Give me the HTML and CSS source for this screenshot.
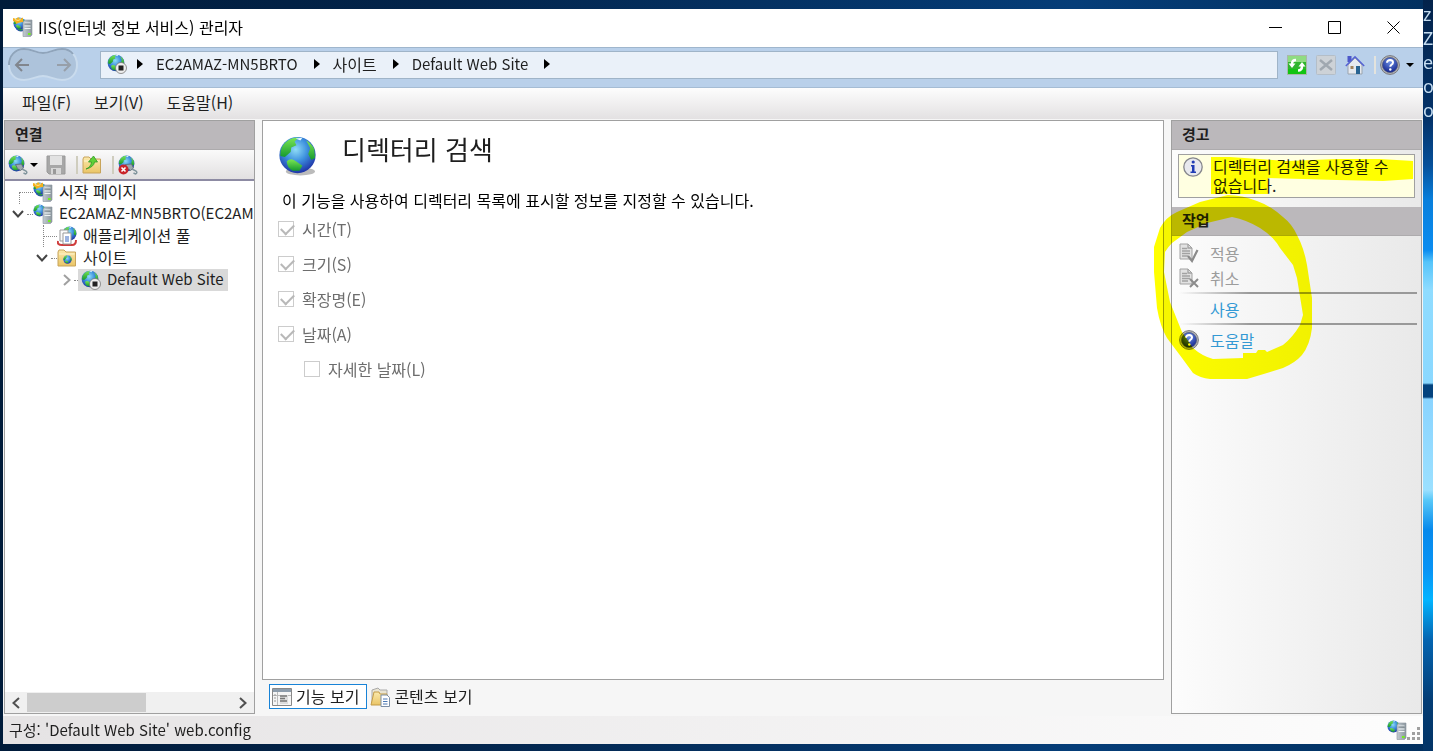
FILE: index.html
```
<!DOCTYPE html>
<html lang="ko">

<head>
  <meta charset="UTF-8">
  <meta name="viewport" content="width=device-width, initial-scale=1.0">
  <title>IIS(인터넷 정보 서비스) 관리자</title>
  <link rel="stylesheet" href="styles.css">
</head>

<body>
  <!-- shared icons -->
  <svg class="sprite" aria-hidden="true">
    <defs>
      <radialGradient id="sea" cx=".45" cy=".35" r=".65">
        <stop offset="0" stop-color="#8fdcf6" />
        <stop offset=".5" stop-color="#3d90de" />
        <stop offset="1" stop-color="#1f35a8" />
      </radialGradient>
      <linearGradient id="land" x2="0" y2="1">
        <stop offset="0" stop-color="#7be653" />
        <stop offset="1" stop-color="#169a30" />
      </linearGradient>
      <linearGradient id="metal" x2="1">
        <stop offset="0" stop-color="#c3ccd2" />
        <stop offset="1" stop-color="#8b969d" />
      </linearGradient>
      <linearGradient id="paper" x2="0" y2="1">
        <stop offset="0" stop-color="#fbe9ac" />
        <stop offset="1" stop-color="#eac566" />
      </linearGradient>
      <radialGradient id="blue" cx=".5" cy=".3" r=".7">
        <stop offset="0" stop-color="#6b8fe6" />
        <stop offset="1" stop-color="#14248c" />
      </radialGradient>
    </defs>
    <symbol id="globe" viewBox="0 0 20 20">
      <circle cx="10" cy="10" r="9.3" fill="url(#sea)" />
      <path d="M2 6C4 2.500 7 1 10.500 1L8.500 3.200 9.500 5 6.800 6.200 6.500 8.500 3.500 11 1.200 10.500Q1 8 2 6Z" fill="url(#land)" />
      <path d="M4.500 13.200Q6.500 11.300 9 13L12.500 15.500 11 18 7.500 18Q4.500 16.500 4.500 13.200Z" fill="url(#land)" />
      <path d="M14.500 2.500Q17.500 4.200 18.600 7L19 11.500 17 12.500 15.500 9.500 16.500 6.500Z" fill="url(#land)" />
      <path d="M9 1.500L12.500 1.200 11.500 2.500Z" fill="#e8faff" />
    </symbol>
    <symbol id="server" viewBox="0 0 20 20">
      <svg x="0" y="0" width="13" height="13"><use href="#globe" /></svg>
      <path d="M10 5L12 3H19V18L17.500 19.500H10Z" fill="url(#metal)" stroke="#8b969d" stroke-width=".6" />
      <path d="M11.500 6H17.500M11.500 9H17.500M11.500 11.500H17.500" stroke="#eef3f5" stroke-width="1.200" />
      <path d="M11.500 7H17.500" stroke="#5d686e" stroke-width=".7" />
      <rect x="15" y="16" width="2.600" height="2" fill="#72f11c" />
    </symbol>
    <symbol id="start" viewBox="0 0 20 20">
      <svg x="1" y="1" width="14" height="14"><use href="#globe" /></svg>
      <use href="#server" />
      <path d="M0 1L3.500 2 5 0 7 2 10 .5 10 5 6.500 5.500 3 7 2.500 5 0 4Z" fill="#f5b01f" />
      <path d="M2 2.500L5 3.500 7.500 2.500" stroke="#fde48b" fill="none" />
    </symbol>
    <symbol id="site" viewBox="0 0 20 20">
      <svg x="0" y="0" width="18" height="18"><use href="#globe" /></svg>
      <circle cx="14" cy="14" r="5.500" fill="#eee" stroke="#777" stroke-width=".8" />
      <rect x="11.500" y="11.500" width="5" height="5" fill="#222" />
    </symbol>
    <symbol id="connect" viewBox="0 0 20 20">
      <svg x="0" y="0" width="17" height="17"><use href="#globe" /></svg>
      <path d="M7.500 9.500L13.500 9 15.500 13 12.500 15.500 9.500 13.500Z" fill="#9ba8ae" stroke="#59666c" stroke-width=".8" />
      <path d="M14 14L18 16Q20 18 17.500 19L15.500 18" fill="none" stroke="#81959d" stroke-width="1.500" />
    </symbol>
    <symbol id="folder" viewBox="0 0 20 20">
      <path d="M1 4L2 2H7L9 4H18.500V18H1Z" fill="url(#paper)" stroke="#c8a45a" />
      <path d="M2 6H17.500" stroke="#fff4cc" />
    </symbol>
    <symbol id="help" viewBox="0 0 20 20">
      <circle cx="10" cy="10" r="9.400" fill="#b8b8ba" stroke="#77787c" />
      <circle cx="10" cy="10" r="7.600" fill="url(#blue)" stroke="#4e5878" stroke-width=".7" />
      <path d="M7 7.800Q7.200 5 10.200 5Q13 5.100 13 7.500Q13 9 11.300 9.900Q10.300 10.500 10.300 11.800" fill="none" stroke="#fff" stroke-width="2" />
      <circle cx="10.300" cy="14.500" r="1.200" fill="#fff" />
    </symbol>
    <symbol id="doc" viewBox="0 0 20 20">
      <path d="M1 1H9L13 5V16H1Z" fill="#e2e2e2" stroke="#a2a2a2" />
      <path d="M9 1V5H13M3 5.500H8M3 8H11M3 10.500H11M3 13H9" fill="none" stroke="#a2a2a2" stroke-width="1.300" />
    </symbol>
  </svg>

  <div class="desktop-text" aria-hidden="true">
    <span>z</span>
    <span>Z</span>
    <span>e</span>
    <span>o</span>
    <span>o</span>
  </div>

  <div class="window">
    <header class="title-bar">
      <svg class="icon"><use href="#start" /></svg>
      <h1>IIS(인터넷 정보 서비스) 관리자</h1>
      <div class="window-buttons">
        <button type="button" aria-label="최소화"><svg viewBox="0 0 13 13"><path d="M0 6.500H13" /></svg></button>
        <button type="button" aria-label="최대화"><svg viewBox="0 0 13 13"><path d="M.5 .5H12.500V12.500H.5Z" /></svg></button>
        <button type="button" aria-label="닫기"><svg viewBox="0 0 13 13"><path d="M.5 .5L12.500 12.500M12.500 .5L.5 12.500" /></svg></button>
      </div>
    </header>

    <div class="nav-bar">
      <div class="history">
        <svg class="history-shape" viewBox="0 0 70 34">
          <path d="M16 1C24 1 28 5 35 5S46 1 54 1C63 1 69 8 69 17S63 32 54 32C46 32 42 28 35 28S24 32 16 32C7 32 1 26 1 17S7 1 16 1Z" fill="#adc3db" stroke="#c9dbed" stroke-width="2" />
          <path d="M1 17C1 8 7 1 16 1C24 1 28 5 35 5S46 1 54 1Q61 1 65 6" fill="none" stroke="#8fa4bb" stroke-width="2" />
        </svg>
        <button type="button" aria-label="뒤로"><svg viewBox="0 0 16 16"><path d="M15 8H2M8 2L2 8L8 14" /></svg></button>
        <button type="button" aria-label="앞으로" class="forward"><svg viewBox="0 0 16 16"><path d="M1 8H14M8 2L14 8L8 14" /></svg></button>
      </div>
      <nav class="address">
        <svg class="icon"><use href="#site" /></svg>
        <i class="arrow"></i>
        <a href="#" class="latin">EC2AMAZ-MN5BRTO</a>
        <i class="arrow"></i>
        <a href="#">사이트</a>
        <i class="arrow"></i>
        <a href="#" class="latin">Default Web Site</a>
        <i class="arrow"></i>
      </nav>
      <div class="nav-tools">
        <button type="button" aria-label="새로 고침">
          <svg class="icon" viewBox="0 0 20 20">
            <rect x=".5" y=".5" width="19" height="19" fill="#2fb52d" stroke="#a9b8a9" />
            <path d="M1 1H19V7H1Z" fill="#8fdc82" />
            <path d="M1 14H19V19H1Z" fill="#12c412" />
            <path d="M9 5Q5 5 5 9" fill="none" stroke="#fff" stroke-width="2.500" />
            <path d="M1.500 8.500H8.500L5 13Z" fill="#fff" />
            <path d="M11 15.500Q15 15.500 15 11" fill="none" stroke="#fff" stroke-width="2.500" />
            <path d="M11.500 11.500H18.500L15 7Z" fill="#fff" />
          </svg>
        </button>
        <button type="button" aria-label="중지" disabled>
          <svg class="icon" viewBox="0 0 20 20">
            <rect x=".5" y=".5" width="19" height="19" rx="1" fill="#cdd2d7" stroke="#b4bec8" />
            <path d="M4 5L16 15M16 5L4 15" stroke="#a0a8b0" stroke-width="2.500" />
          </svg>
        </button>
        <button type="button" aria-label="홈">
          <svg class="icon" viewBox="0 0 20 20">
            <path d="M2.500 1H6.500V7H2.500Z" fill="#4b57c9" />
            <path d="M3 10L10 3 17 10V19H3Z" fill="#e6e9ee" stroke="#9ba4ae" />
            <path d="M.8 11L10 1.800 19.200 11" fill="none" stroke="#5562d4" stroke-width="1.500" />
            <path d="M11 11H15V19H11Z" fill="#286391" />
            <path d="M5.500 11H8.500V14H5.500Z" fill="#a1835d" />
          </svg>
        </button>
        <span class="divider"></span>
        <button type="button" class="help-menu" aria-label="도움말">
          <svg class="icon"><use href="#help" /></svg>
          <i class="caret"></i>
        </button>
      </div>
    </div>

    <nav class="menu-bar">
      <button type="button">파일(F)</button>
      <button type="button">보기(V)</button>
      <button type="button">도움말(H)</button>
    </nav>

    <main class="panes">
      <section class="pane connections">
        <h2>연결</h2>
        <div class="toolbar">
          <button type="button" aria-label="연결 만들기"><svg class="icon"><use href="#connect" /></svg><i class="caret"></i></button>
          <button type="button" aria-label="저장" disabled>
            <svg class="icon" viewBox="0 0 20 20">
              <path d="M1 1H19V19H3L1 17Z" fill="#a7a7a7" stroke="#999" />
              <path d="M4 1H16V10H4Z" fill="#e2e2e2" />
              <path d="M5 13H15V19H5Z" fill="#d7d7d7" />
              <path d="M7 14H10V19H7Z" fill="#999" />
            </svg>
          </button>
          <span class="divider"></span>
          <button type="button" aria-label="위로">
            <svg class="icon" viewBox="0 0 20 20">
              <use href="#folder" />
              <path d="M4 14Q9 12 9.500 7L6.500 7 11.500 1 15.500 7 12.500 7Q12 12 4 14Z" fill="#5fd038" stroke="#2e9a24" stroke-width=".8" />
            </svg>
          </button>
          <span class="divider"></span>
          <button type="button" aria-label="연결 제거">
            <svg class="icon" viewBox="0 0 20 20">
              <use href="#connect" />
              <circle cx="5.500" cy="14.500" r="5" fill="#c9252b" />
              <path d="M3.500 12.500L7.500 16.500M7.500 12.500L3.500 16.500" stroke="#fff" stroke-width="1.600" />
            </svg>
          </button>
        </div>

        <ul class="tree">
          <li class="node level-1">
            <span class="toggle dots corner"></span>
            <svg class="icon"><use href="#start" /></svg>
            <span class="node-name">시작 페이지</span>
          </li>
          <li class="node level-1">
            <span class="toggle"><svg viewBox="0 0 12 8"><path d="M1 1L6 6.500 11 1" /></svg></span>
            <svg class="icon"><use href="#server" /></svg>
            <span class="node-name latin">EC2AMAZ-MN5BRTO(EC2AM</span>
          </li>
          <li class="node level-2">
            <span class="toggle dots through"></span>
            <svg class="icon" viewBox="0 0 20 20">
              <svg x="5" y="0" width="15" height="15"><use href="#globe" /></svg>
              <path d="M1 15Q0 19 5 19H15Q19 19 19 14" fill="none" stroke="#cf3d3d" stroke-width="2" />
              <path d="M3 4H11V15H3Z" fill="#fafafa" stroke="#999" />
              <path d="M6 7H14V18H6Z" fill="#fff" stroke="#999" />
              <path d="M8 11H12M8 13H12M8 15H12" stroke="#3767c1" />
            </svg>
            <span class="node-name">애플리케이션 풀</span>
          </li>
          <li class="node level-2">
            <span class="toggle"><svg viewBox="0 0 12 8"><path d="M1 1L6 6.500 11 1" /></svg></span>
            <svg class="icon" viewBox="0 0 20 20">
              <use href="#folder" />
              <svg x="6" y="7" width="9" height="9"><use href="#globe" /></svg>
            </svg>
            <span class="node-name">사이트</span>
          </li>
          <li class="node level-3">
            <span class="toggle closed"><svg viewBox="0 0 8 12"><path d="M1 1L6.500 6 1 11" /></svg></span>
            <span class="selected">
              <svg class="icon"><use href="#site" /></svg>
              <span class="node-name latin">Default Web Site</span>
            </span>
          </li>
        </ul>

        <div class="scroll-bar">
          <button type="button" aria-label="왼쪽"><svg viewBox="0 0 8 12"><path d="M7 1L1.500 6 7 11" /></svg></button>
          <div class="track"><div class="thumb"></div></div>
          <button type="button" aria-label="오른쪽"><svg viewBox="0 0 8 12"><path d="M1 1L6.500 6 1 11" /></svg></button>
        </div>
      </section>

      <section class="feature">
        <form class="feature-page">
          <div class="feature-title">
            <svg class="feature-icon" viewBox="0 0 40 42">
              <ellipse cx="23" cy="37" rx="15" ry="4" fill="#bbb" />
              <svg x="0" y="0" width="40" height="40"><use href="#globe" /></svg>
            </svg>
            <h2>디렉터리 검색</h2>
          </div>
          <p>이 기능을 사용하여 디렉터리 목록에 표시할 정보를 지정할 수 있습니다.</p>
          <div class="option">
            <input type="checkbox" id="time" checked disabled>
            <label for="time">시간(T)</label>
          </div>
          <div class="option">
            <input type="checkbox" id="size" checked disabled>
            <label for="size">크기(S)</label>
          </div>
          <div class="option">
            <input type="checkbox" id="extension" checked disabled>
            <label for="extension">확장명(E)</label>
          </div>
          <div class="option">
            <input type="checkbox" id="date" checked disabled>
            <label for="date">날짜(A)</label>
          </div>
          <div class="option nested">
            <input type="checkbox" id="long-date" disabled>
            <label for="long-date">자세한 날짜(L)</label>
          </div>
        </form>
        <div class="view-tabs">
          <button type="button" class="active">
            <svg class="icon" viewBox="0 0 20 20">
              <path d="M.5 1.500H19.500V18.500H.5Z" fill="#f5f5f5" stroke="#888" />
              <path d="M1 2H19V5H1Z" fill="#8d9cab" />
              <path d="M5.500 5V18M1 8.500H19" stroke="#bbb" />
              <path d="M8 8H16V17H8Z" fill="#ddd" />
              <path d="M8 9H15M8 11.500H13M8 14H15" stroke="#777" stroke-width="1.300" />
              <path d="M2 8H4M2 11H4M2 14H4" stroke="#999" />
            </svg>
            <span>기능 보기</span>
          </button>
          <button type="button">
            <svg class="icon" viewBox="0 0 20 20">
              <path d="M2 3L8 1 10 3H17V16H2Z" fill="#e9e4d2" stroke="#aaa" />
              <path d="M1 18L4 5H9L10 7H17L15 18Z" fill="url(#paper)" stroke="#c39b46" />
              <path d="M11 8H17L19.500 10.500V19.500H11Z" fill="#fff" stroke="#7d8fa5" />
              <path d="M13 12H17.500M13 14.500H17.500M13 17H17.500" stroke="#4b78b5" />
            </svg>
            <span>콘텐츠 보기</span>
          </button>
        </div>
      </section>

      <aside class="pane actions">
        <h2>경고</h2>
        <div class="alert">
          <svg class="icon" viewBox="0 0 20 20">
            <circle cx="10" cy="10" r="9.200" fill="#e8e9ee" stroke="#85868c" stroke-width="1.300" />
            <path d="M8 8H11.500V14.500H13V16H7.500V14.500H9V9.500H8Z" fill="#203cb5" />
            <circle cx="10.200" cy="5" r="1.600" fill="#203cb5" />
          </svg>
          <p>디렉터리 검색을 사용할 수 없습니다.</p>
        </div>
        <h2>작업</h2>
        <div class="action-list">
          <button type="button" disabled>
            <svg class="icon" viewBox="0 0 20 20">
              <use href="#doc" />
              <path d="M9 13L13 18 18.500 7" fill="none" stroke="#8b8b8b" stroke-width="2.200" />
            </svg>
            적용
          </button>
          <button type="button" disabled>
            <svg class="icon" viewBox="0 0 20 20">
              <use href="#doc" />
              <path d="M11 11L19 19M19 11L11 19" stroke="#8b8b8b" stroke-width="2" />
            </svg>
            취소
          </button>
          <hr>
          <a href="#"><span class="icon"></span>사용</a>
          <hr>
          <a href="#"><svg class="icon"><use href="#help" /></svg>도움말</a>
        </div>
        <!-- highlighter marks -->
        <svg class="marker" viewBox="1171 120 251 300" aria-hidden="true">
          <path d="M1211 157H1230L1287 161 1337 159H1380L1413 161V179L1383 181 1337 180 1268 178V194H1211Z" />
          <path fill-rule="evenodd" d="M1154 265V247L1160 228Q1166 217 1177 212L1200 202 1228 195Q1242 195 1257 201Q1271 206 1283 217Q1292 224 1297 235Q1304 248 1307 265L1312 298V328Q1310 345 1302 355Q1295 363 1283 368L1267 373 1247 379H1210Q1200 378 1193 373L1182 358 1167 338Q1160 326 1157 308L1154 272ZM1232 217Q1247 220 1260 228Q1274 237 1280 248L1293 265 1297 278 1303 315 1300 325Q1293 337 1283 345L1267 352 1265 350H1258L1256 353H1243V358L1213 359Q1202 356 1193 348L1182 332 1170 302 1164 272 1165 252Q1168 247 1172 243L1187 232 1207 223Z" />
        </svg>
      </aside>
    </main>

    <footer class="status-bar">
      <span class="latin">구성: 'Default Web Site' web.config</span>
      <div class="status-icons">
        <svg class="icon"><use href="#server" /></svg>
        <svg class="grip" viewBox="0 0 13 13"><path d="M10 0H13V3H10ZM10 5H13V8H10ZM10 10H13V13H10ZM5 5H8V8H5ZM5 10H8V13H5ZM0 10H3V13H0Z" /></svg>
      </div>
    </footer>
  </div>
</body>

</html>
```
FILE: styles.css
```
* {
  margin: 0;
  padding: 0;
  box-sizing: border-box;
}

body {
  height: 100vh;
  padding: 9px 10px 7px 3px;
  overflow: hidden;
  background:
    linear-gradient(#03234b 0, #04336a 120px, #06509a 165px, #087fdc 200px, #0a8cf0 250px, #55c4fa 262px, #8fdcff 290px, #8ad8ff 383px, #04437e 385px, #04437e 397px, #8ad4ff 399px, #9be0ff 490px, #58c8f8 500px, #0689ec 530px, #0894f5 570px, #01b4ff 600px, #0464b0 640px, #033d75 700px, #033466) right / 10px 100% no-repeat,
    linear-gradient(90deg, #001b3a, #03244a 30%, #053d78 75%, #02305f);
  font-family: "Noto Sans CJK KR", sans-serif;
  font-size: 16px;
  line-height: 22px;
  color: #1e1e1e;
}

button {
  display: flex;
  align-items: center;
  border: none;
  background: none;
  font: inherit;
  color: inherit;
}

a {
  color: inherit;
  text-decoration: none;
}

ul {
  list-style: none;
}

.sprite {
  position: absolute;
  width: 0;
  height: 0;
}

.icon {
  flex: none;
  display: block;
  width: 20px;
  height: 20px;
}

.latin {
  font-size: 15px;
}

.arrow {
  border: 5px solid transparent;
  border-left: 6px solid #000;
  border-right: none;
}

.caret {
  border: 4px solid transparent;
  border-top-color: #000;
  border-bottom: none;
}

.divider {
  width: 2px;
  height: 18px;
  background: #cfcdbe;
}

/* wallpaper text that sticks out from behind the window */
.desktop-text {
  position: absolute;
  top: 2px;
  right: 0;
  width: 10px;
  font: 18px/24px "Noto Sans", sans-serif;
  color: #c4dcf0;
}

.desktop-text span {
  display: block;
}

.window {
  position: relative;
  display: flex;
  flex-direction: column;
  height: 100%;
  background: #f6f6f6;
}

/* title bar */
.title-bar {
  display: flex;
  align-items: center;
  height: 38px;
  padding: 0 0 2px 10px;
  background: #fff;
}

.title-bar h1 {
  flex: 1;
  padding-left: 5px;
  font-size: 16px;
  font-weight: normal;
  color: #000;
}

.window-buttons {
  display: flex;
}

.window-buttons button {
  justify-content: center;
  width: 59px;
  height: 36px;
}

.window-buttons svg {
  width: 13px;
  height: 13px;
  fill: none;
  stroke: #000;
}

/* address row */
.nav-bar {
  display: flex;
  align-items: center;
  height: 41px;
  padding: 0 9px 5px 5px;
  border-top: 1px solid #9fb6cd;
  border-bottom: 1px solid #a5bcd4;
  background: #b9d0ea;
}

.history {
  position: relative;
  display: flex;
  justify-content: space-between;
  width: 70px;
  height: 34px;
  padding: 0 6px;
}

.history-shape {
  position: absolute;
  left: 0;
  top: 0;
  width: 70px;
  height: 34px;
}

.history button {
  position: relative;
}

.history button svg {
  width: 16px;
  height: 16px;
  fill: none;
  stroke: #81868e;
  stroke-width: 2;
}

.history .forward svg {
  stroke: #979fa9;
}

.address {
  flex: 1;
  display: flex;
  align-items: center;
  height: 28px;
  margin-left: 22px;
  padding: 0 0 2px 6px;
  border: 1px solid #9fb4c8;
  background: #eaf1f9;
}

.address .icon {
  margin-right: 10px;
}

.address a {
  padding: 0 16px 0 13px;
}

.nav-tools {
  display: flex;
  align-items: center;
  gap: 9px;
  padding-left: 9px;
}

.nav-tools .divider {
  background: #e3e3dd;
}

.help-menu {
  gap: 6px;
  margin-left: -5px;
}

/* menu */
.menu-bar {
  display: flex;
  align-items: center;
  gap: 23px;
  height: 31px;
  padding: 0 19px 3px;
  background: linear-gradient(#fdfdfd, #e3e1e2);
}

/* three columns */
.panes {
  flex: 1;
  min-height: 0;
  display: grid;
  grid-template-columns: 251px 1fr 251px;
  gap: 7px;
  padding: 1px 1px 2px;
}

.pane {
  position: relative;
  display: flex;
  flex-direction: column;
  min-width: 0;
  border: 1px solid #a0a0a0;
}

.pane h2 {
  height: 29px;
  padding-left: 10px;
  border-bottom: 1px solid #adabad;
  background: #bbb8bb;
  font-size: 15px;
  line-height: 25px;
}

.connections {
  overflow: hidden;
  background: #fff;
}

.toolbar {
  display: flex;
  align-items: center;
  gap: 8px;
  height: 31px;
  padding-left: 3px;
  border-bottom: 2px solid #8d8ba3;
  background: linear-gradient(#fafafa, #e2e0e1);
}

.toolbar button {
  gap: 2px;
}

.toolbar .divider {
  margin: 0 -4px 0 2px;
}

.tree {
  flex: 1;
  overflow: hidden;
}

.node {
  display: flex;
  align-items: center;
  height: 22px;
  white-space: nowrap;
}

.level-1 {
  padding-left: 6px;
}

.level-2 {
  padding-left: 30px;
}

.level-3 {
  padding-left: 54px;
}

.toggle {
  flex: none;
  width: 22px;
  height: 22px;
  display: flex;
  align-items: center;
}

.toggle svg {
  width: 12px;
  height: 8px;
  margin-left: 1px;
  fill: none;
  stroke: #444;
  stroke-width: 2;
}

.toggle:not(.dots)::after {
  content: "";
  width: 6px;
  margin-left: 3px;
  border-top: 1px dotted #888;
}

.dots::before {
  content: "";
  width: 14px;
  height: 11px;
  margin: 11px 0 0 8px;
  border-top: 1px dotted #888;
  border-left: 1px dotted #888;
}

.through::before {
  height: 22px;
  margin: 0 0 0 8px;
  border-top: none;
  background: linear-gradient(90deg, #888 50%, transparent 50%) 0 50% / 2px 1px repeat-x;
}

.closed svg {
  width: 8px;
  height: 12px;
  margin-left: 4px;
  stroke: #a0a0a0;
}

.node-name {
  padding: 0 0 2px 6px;
}

.selected {
  display: flex;
  align-items: center;
  height: 22px;
  margin-left: -3px;
  padding: 0 4px 0 3px;
  background: #d9d9d9;
}

.scroll-bar {
  display: flex;
  height: 21px;
  background: #f0f0f0;
}

.scroll-bar button {
  justify-content: center;
  width: 22px;
}

.scroll-bar svg {
  width: 8px;
  height: 12px;
  fill: none;
  stroke: #505050;
  stroke-width: 2;
}

.track {
  flex: 1;
  padding: 1px 0;
}

.thumb {
  width: 58%;
  height: 100%;
  background: #cdcdcd;
}

/* feature page */
.feature {
  display: flex;
  flex-direction: column;
  min-width: 0;
}

.feature-page {
  flex: 1;
  padding: 14px 15px;
  border: 1px solid #a0a0a0;
  background: #fff;
}

.feature-title {
  display: flex;
  height: 54px;
  gap: 25px;
}

.feature-icon {
  width: 39px;
  height: 42px;
}

.feature-title h2 {
  font-size: 26px;
  font-weight: normal;
  line-height: 28px;
}

.feature-page p {
  padding-left: 4px;
  color: #000;
}

.option {
  display: flex;
  align-items: center;
  gap: 8px;
  height: 35px;
  color: #6d6d6d;
}

.nested {
  padding-left: 26px;
}

.option input {
  appearance: none;
  width: 16px;
  height: 16px;
  border: 1px solid #ccc;
  background: #fff;
}

.option input:checked::before {
  content: "";
  display: block;
  width: 11px;
  height: 6px;
  margin: 2px 0 0 2px;
  border: solid #b8b8b8;
  border-width: 0 0 2px 2px;
  transform: rotate(-45deg);
}

.view-tabs {
  display: flex;
  gap: 2px;
  height: 34px;
  padding: 4px 7px 5px;
}

.view-tabs button {
  gap: 4px;
  padding: 0 7px 0 2px;
  border: 1px solid transparent;
}

.view-tabs button:not(.active) {
  padding-left: 0;
}

.view-tabs span {
  padding-bottom: 2px;
}

.view-tabs .active {
  border-color: #1883d7;
  background: #fff;
}

/* alerts and actions */
.actions {
  background: linear-gradient(90deg, #fcfcfc, #e9e9e9);
}

.alert {
  display: flex;
  gap: 10px;
  margin: 4px 6px 9px;
  padding: 2px 4px;
  border: 1px solid #a0a0a0;
  background: #ffffe1;
  line-height: 19px;
  word-break: keep-all;
}

.action-list {
  padding: 4px 4px 0 7px;
}

.action-list button,
.action-list a {
  display: flex;
  align-items: center;
  gap: 11px;
  height: 25px;
}

.action-list button {
  color: #9c9c9c;
}

.action-list a {
  color: #3399d4;
}

.action-list hr {
  height: 2px;
  margin: 2px 0;
  border: none;
  background: linear-gradient(90deg, transparent, #999 30%);
}

.marker {
  position: absolute;
  left: -1px;
  top: -1px;
  width: 251px;
  height: 300px;
  overflow: visible;
  fill: #ff0;
  mix-blend-mode: multiply;
  pointer-events: none;
}

/* status bar */
.status-bar {
  display: flex;
  align-items: center;
  justify-content: space-between;
  height: 28px;
  padding: 0 3px 1px 6px;
  background: linear-gradient(90deg, #e5e3e4, #fdfdfd);
}

.status-icons {
  display: flex;
  align-items: flex-end;
}

.grip {
  width: 13px;
  height: 13px;
  fill: #a0a0a0;
}
```
